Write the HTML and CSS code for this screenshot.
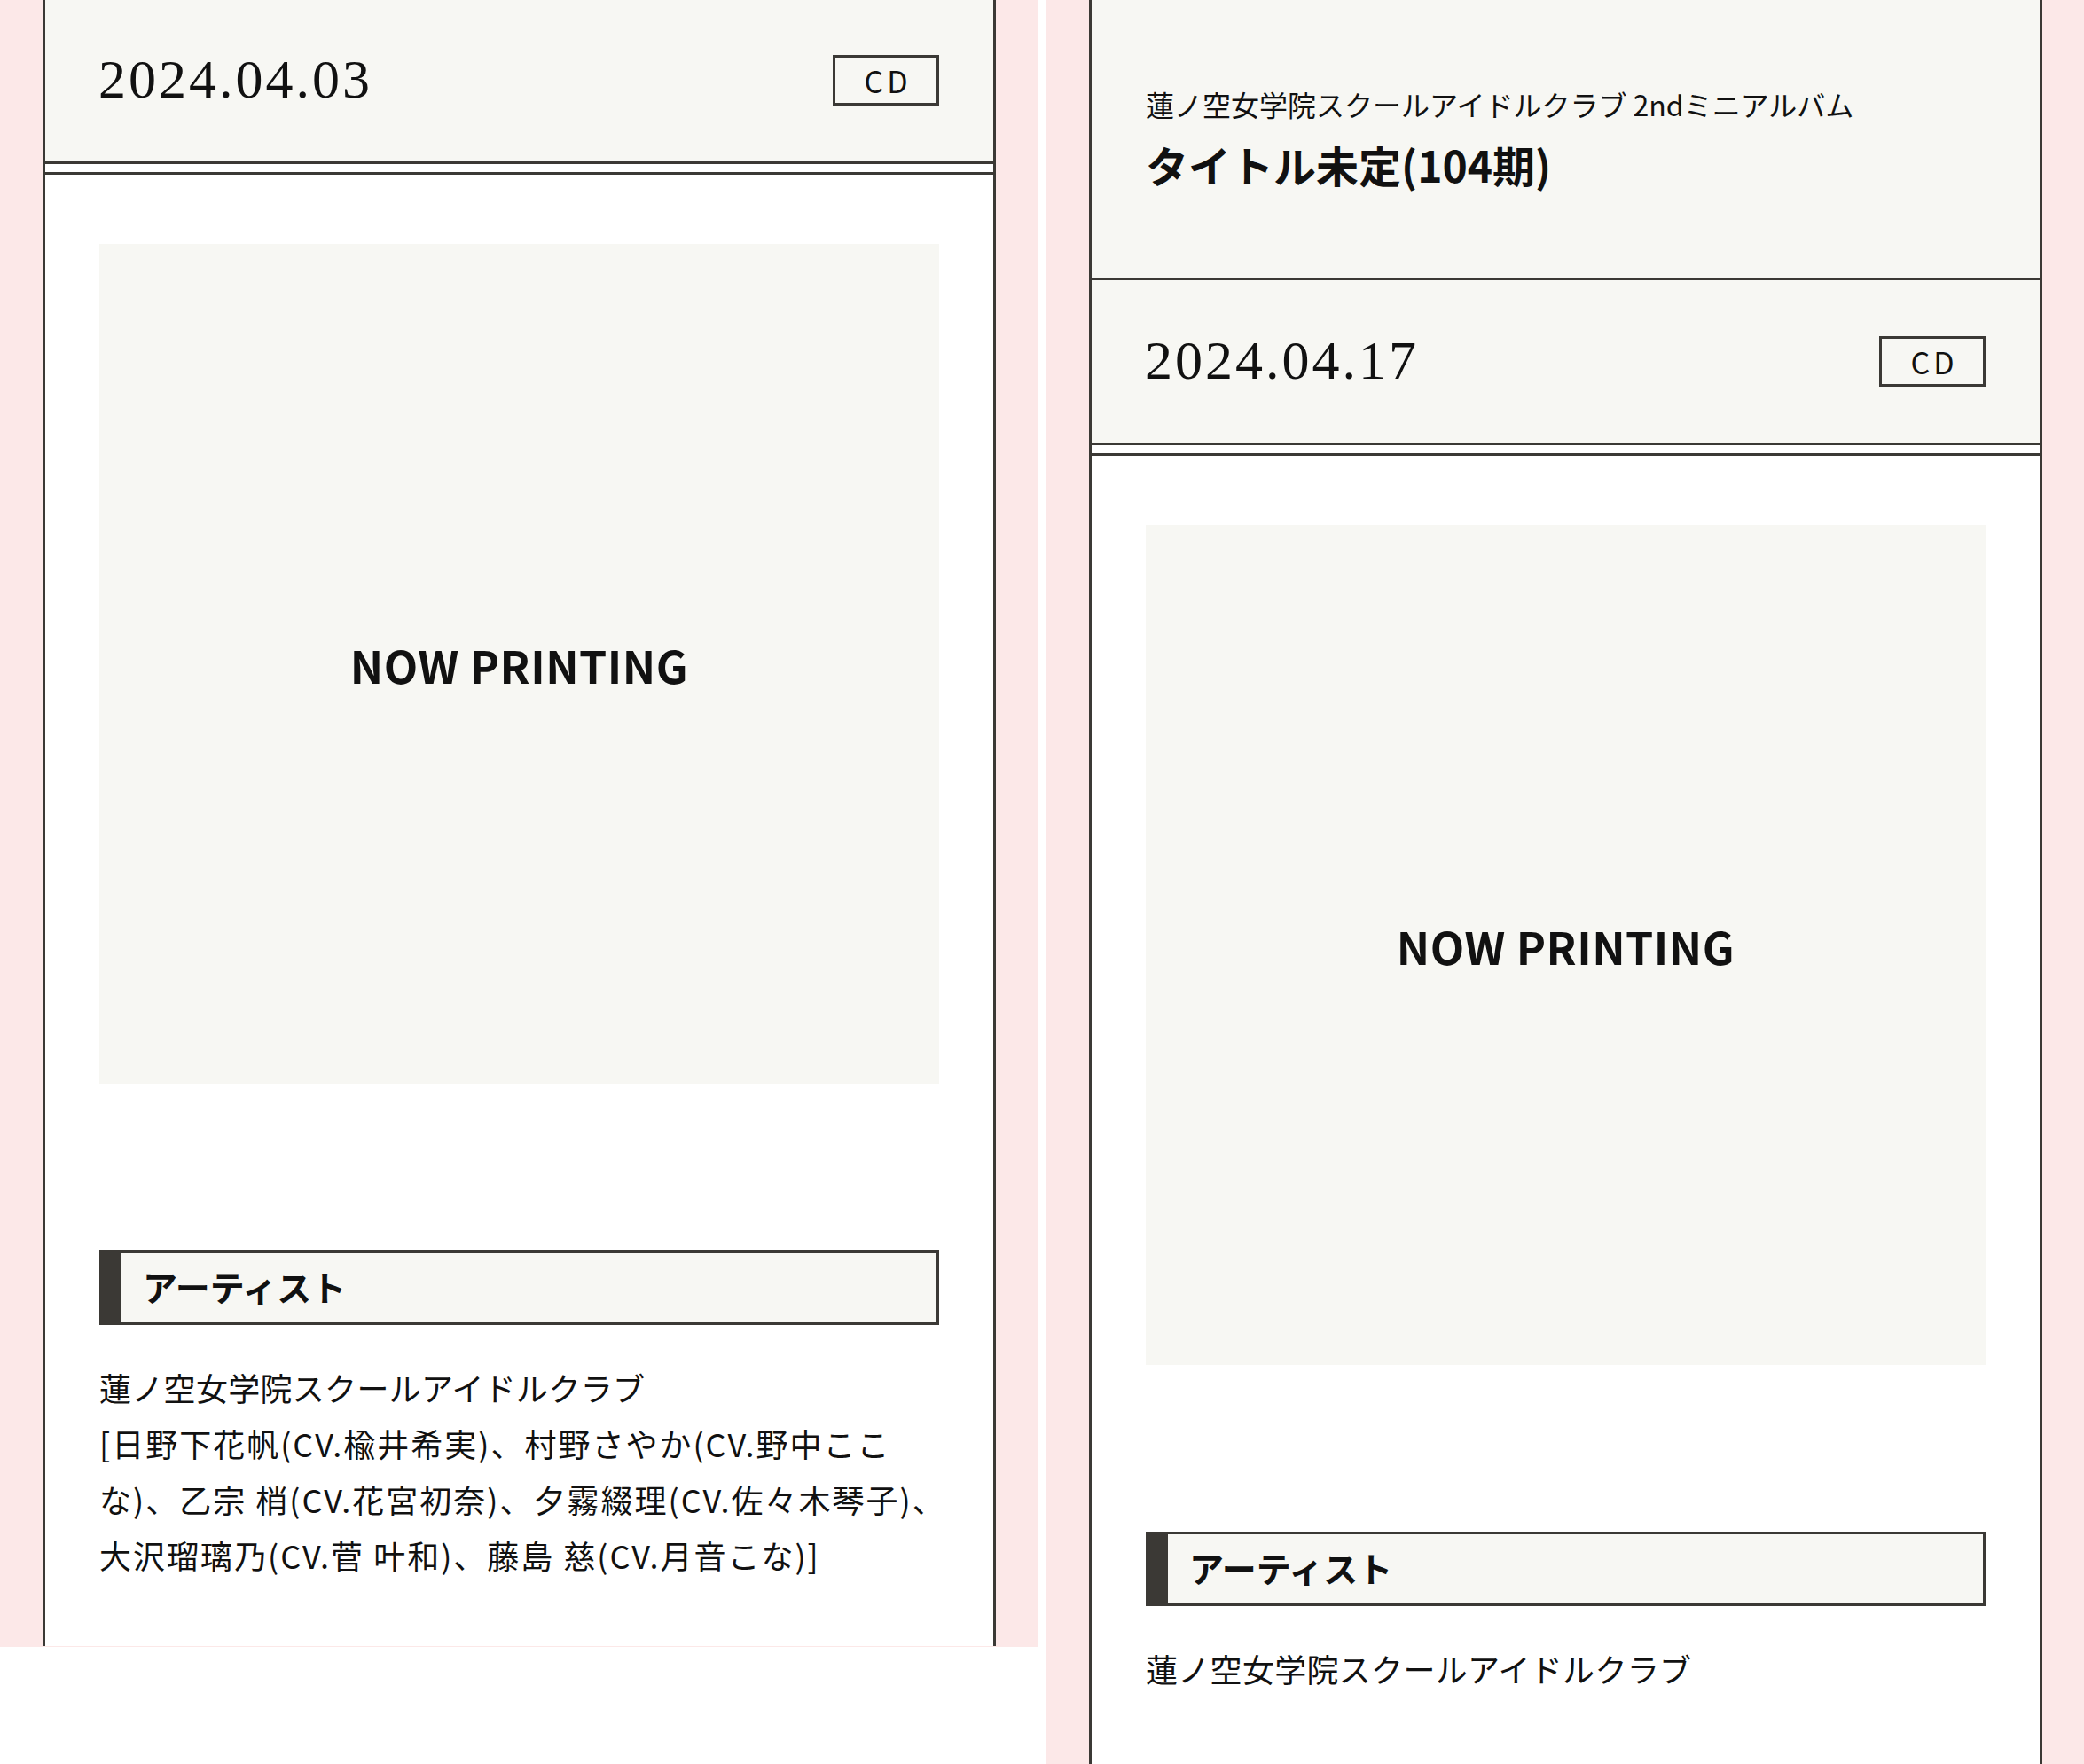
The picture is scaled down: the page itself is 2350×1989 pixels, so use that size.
FILE: index.html
```html
<!DOCTYPE html>
<html lang="ja">
<head>
    <meta charset="UTF-8">
    <title>Discography</title>
    <link rel="stylesheet" href="styles.css">
</head>
<body>
    <div class="Shot ShotLeft">
        <div class="Card CardTop">
            <div class="DateHead">
                <span class="Date">2024.04.03</span>
                <span class="Tag">CD</span>
            </div>
            <div class="CardBody">
                <div class="Jacket">NOW PRINTING</div>
                <h3 class="Heading">アーティスト</h3>
                <p class="Text">蓮ノ空女学院スクールアイドルクラブ<br><span class="Members">[日野下花帆(CV.楡井希実)、村野さやか(CV.野中ここな)、乙宗 梢(CV.花宮初奈)、夕霧綴理(CV.佐々木琴子)、大沢瑠璃乃(CV.菅 叶和)、藤島 慈(CV.月音こな)]</span></p>
            </div>
        </div>
    </div>

    <div class="Shot ShotRight">
        <div class="Card">
            <div class="TitleHead">
                <p class="SubTitle">蓮ノ空女学院スクールアイドルクラブ 2ndミニアルバム</p>
                <h2 class="Title">タイトル未定(104期)</h2>
            </div>
            <div class="DateHead">
                <span class="Date">2024.04.17</span>
                <span class="Tag">CD</span>
            </div>
            <div class="CardBody">
                <div class="Jacket">NOW PRINTING</div>
                <h3 class="Heading">アーティスト</h3>
                <p class="Text">蓮ノ空女学院スクールアイドルクラブ</p>
            </div>
        </div>
    </div>
</body>
</html>
```

FILE: styles.css
```css
body {
    margin: 0;
    display: flex;
    align-items: flex-start;
    gap: 10px;
    background: #fff;
    color: #111;
    font-family: "Noto Sans CJK JP", "Noto Sans", sans-serif;
}

.Shot {
    width: 1170px;
    background: #fce8e8;
    overflow: hidden;
}

.ShotLeft {
    height: 1857px;
}

.ShotRight {
    height: 1989px;
}

.Card {
    box-sizing: border-box;
    min-height: 100%;
    margin: 0 47px 0 48px;
    background: #fff;
    border-left: 3px solid #3b3935;
    border-right: 3px solid #3b3935;
}

.CardTop {
    margin-top: -1px;
}

.TitleHead {
    box-sizing: border-box;
    height: 316px;
    padding: 94px 61px 0;
    background: #f7f7f3;
    border-bottom: 3px solid #3b3935;
}

.SubTitle {
    margin: 0 0 9px;
    font-size: 32px;
    line-height: 46px;
}

.Title {
    margin: 0;
    font-size: 48px;
    font-weight: 700;
    line-height: 72px;
}

.DateHead {
    height: 183px;
    padding: 0 61px 0 60px;
    display: flex;
    align-items: center;
    justify-content: space-between;
    background: #f7f7f3;
    border-bottom: 3px solid #3b3935;
}

.Date {
    font-family: "Liberation Serif", serif;
    font-size: 62px;
    letter-spacing: 3px;
    line-height: 1;
    margin-top: -4px;
}

.Tag {
    box-sizing: border-box;
    width: 120px;
    height: 57px;
    display: flex;
    align-items: center;
    justify-content: center;
    padding-left: 4px;
    border: 3px solid #3b3935;
    font-size: 34px;
    letter-spacing: 4px;
    line-height: 1;
}

.CardBody {
    margin-top: 9px;
    border-top: 3px solid #3b3935;
    padding: 78px 61px 0;
}

.Jacket {
    aspect-ratio: 1 / 1;
    display: flex;
    align-items: center;
    justify-content: center;
    background: #f7f7f3;
    font-size: 50px;
    font-weight: 700;
    letter-spacing: 0.5px;
}

.Heading {
    box-sizing: border-box;
    height: 84px;
    margin: 188px 0 0;
    padding: 0 0 5px 24px;
    display: flex;
    align-items: center;
    background: #f7f7f3;
    border: 3px solid #3b3935;
    border-left-width: 25px;
    font-size: 39px;
    font-weight: 700;
}

.Text {
    margin: 39px -28px 0 0;
    font-size: 36px;
    line-height: 63px;
    letter-spacing: 0.3px;
}

.Members {
    letter-spacing: 2px;
}
```
